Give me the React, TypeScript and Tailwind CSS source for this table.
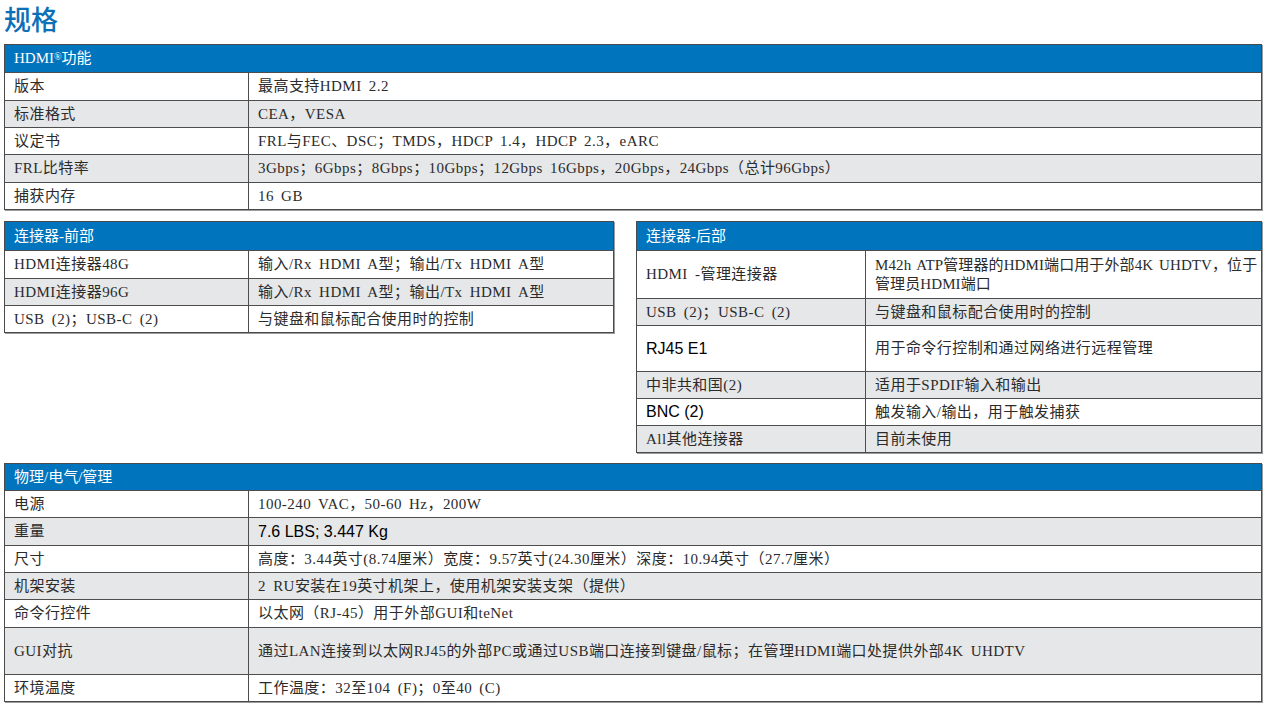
import React from 'react';

type Row = {
  label: React.ReactNode;
  value: React.ReactNode;
  h?: number;
  sansLabel?: boolean;
  sansValue?: boolean;
};

const serif = 'font-["Liberation_Serif","Noto_Sans_CJK_SC",serif] tracking-[0.45px] [word-spacing:3px]';
const sans = 'font-["Liberation_Sans","Noto_Sans_CJK_SC",sans-serif]';

function SpecTable({
  title,
  rows,
  labelW,
  headH = 27,
  className = '',
}: {
  title: React.ReactNode;
  rows: Row[];
  labelW: string;
  headH?: number;
  className?: string;
}) {
  return (
    <div className={`border border-[#4a4a4a] shadow-[1px_1px_0_#9b9b9b] ${className}`}>
      <div
        className='bg-[#0074bd] flex items-center pl-[9px] text-white text-[15px] font-["Liberation_Serif","Noto_Sans_CJK_SC",serif]'
        style={{ height: headH }}
      >
        {title}
      </div>
      {rows.map((r, i) => (
        <div
          key={i}
          className={`flex border-t border-[#4d4d4d] text-[15px] text-[#2b2b2b] ${i % 2 === 1 ? 'bg-[#e6e7e8]' : 'bg-white'}`}
          style={{ height: r.h ?? 27 }}
        >
          <div
            className={`${labelW} shrink-0 border-r border-[#4d4d4d] flex items-center pl-[9px] ${
              r.sansLabel ? `${sans} text-[16px] text-black` : serif
            }`}
          >
            {r.label}
          </div>
          <div
            className={`flex-1 min-w-0 flex items-center pl-[9px] leading-[19px] ${
              r.sansValue ? `${sans} text-[16px] text-black` : serif
            }`}
          >
            {r.value}
          </div>
        </div>
      ))}
    </div>
  );
}

export default function App() {
  const hdmi: Row[] = [
    { label: '版本', value: '最高支持HDMI 2.2', h: 28 },
    { label: '标准格式', value: 'CEA，VESA' },
    { label: '议定书', value: 'FRL与FEC、DSC；TMDS，HDCP 1.4，HDCP 2.3，eARC' },
    { label: 'FRL比特率', value: '3Gbps；6Gbps；8Gbps；10Gbps；12Gbps 16Gbps，20Gbps，24Gbps（总计96Gbps）', h: 28 },
    { label: '捕获内存', value: '16 GB' },
  ];

  const front: Row[] = [
    { label: 'HDMI连接器48G', value: '输入/Rx HDMI A型；输出/Tx HDMI A型', h: 28 },
    { label: 'HDMI连接器96G', value: '输入/Rx HDMI A型；输出/Tx HDMI A型' },
    { label: 'USB (2)；USB-C (2)', value: '与键盘和鼠标配合使用时的控制' },
  ];

  const rear: Row[] = [
    {
      label: 'HDMI -管理连接器',
      value: (
        <span className="whitespace-nowrap tracking-[0.1px] [word-spacing:2px]">
          M42h ATP管理器的HDMI端口用于外部4K UHDTV，位于
          <br />
          管理员HDMI端口
        </span>
      ),
      h: 48,
    },
    { label: 'USB (2)；USB-C (2)', value: '与键盘和鼠标配合使用时的控制' },
    { label: 'RJ45 E1', value: '用于命令行控制和通过网络进行远程管理', h: 46, sansLabel: true },
    { label: '中非共和国(2)', value: '适用于SPDIF输入和输出' },
    { label: 'BNC (2)', value: '触发输入/输出，用于触发捕获', sansLabel: true },
    { label: 'All其他连接器', value: '目前未使用' },
  ];

  const phys: Row[] = [
    { label: '电源', value: '100-240 VAC，50-60 Hz，200W' },
    { label: '重量', value: '7.6 LBS; 3.447 Kg', h: 28, sansValue: true },
    { label: '尺寸', value: '高度：3.44英寸(8.74厘米）宽度：9.57英寸(24.30厘米）深度：10.94英寸（27.7厘米）' },
    { label: '机架安装', value: '2 RU安装在19英寸机架上，使用机架安装支架（提供）' },
    { label: '命令行控件', value: '以太网（RJ-45）用于外部GUI和teNet', h: 28 },
    {
      label: 'GUI对抗',
      value: '通过LAN连接到以太网RJ45的外部PC或通过USB端口连接到键盘/鼠标；在管理HDMI端口处提供外部4K UHDTV',
      h: 47,
    },
    { label: '环境温度', value: '工作温度：32至104 (F)；0至40 (C)' },
  ];

  return (
    <div className="w-[1267px] h-[706px] bg-white overflow-hidden pl-[4px] pr-[5px]">
      <h1 className='h-[44px] pt-[1px] text-[27px] leading-[36px] font-medium text-[#0b70b8] font-["Noto_Sans_CJK_SC",sans-serif]'>
        规格
      </h1>
      <SpecTable
        title={
          <span>
            HDMI<span className="text-[10px] align-[3px]">®</span>功能
          </span>
        }
        rows={hdmi}
        labelW="w-[244px]"
      />
      <div className="flex justify-between mt-[11px]">
        <SpecTable title="连接器-前部" rows={front} labelW="w-[244px]" headH={28} className="w-[610px] self-start" />
        <SpecTable title="连接器-后部" rows={rear} labelW="w-[229px]" headH={28} className="w-[626px]" />
      </div>
      <SpecTable title="物理/电气/管理" rows={phys} labelW="w-[244px]" headH={26} className="mt-[10px]" />
    </div>
  );
}
